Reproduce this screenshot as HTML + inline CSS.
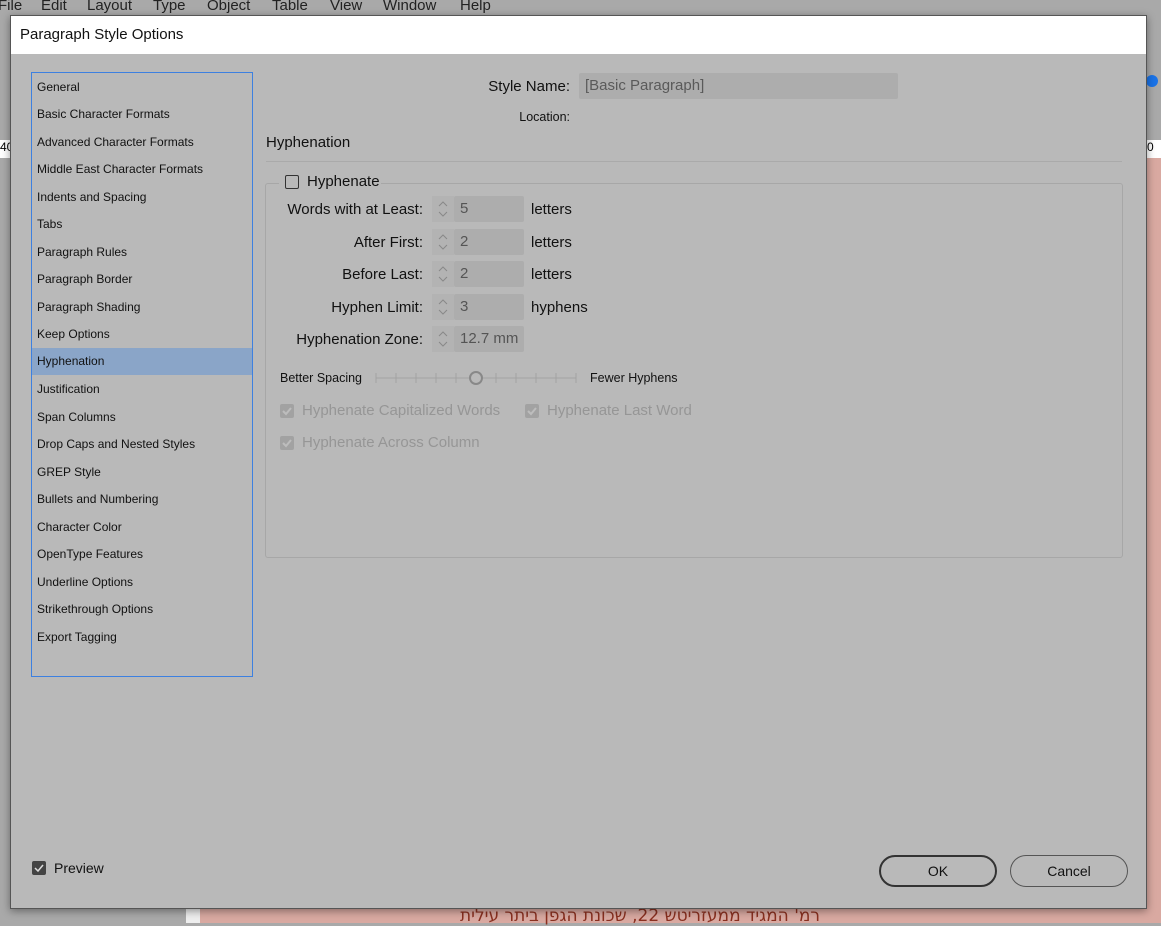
<!DOCTYPE html>
<html><head><meta charset="utf-8"><style>
*{margin:0;padding:0;box-sizing:border-box}
body{width:1161px;height:923px;overflow:hidden;background:#a9a9a9;font-family:"Liberation Sans",sans-serif;position:relative}
.abs{position:absolute}
.menu{top:-3px;left:0;font-size:15px;color:#222;white-space:nowrap}
.menu span{position:absolute}
.dlg{left:10px;top:15px;width:1137px;height:894px;background:#b9b9b9;border:1px solid #555;box-shadow:0 2px 8px rgba(0,0,0,.4)}
.title{left:0;top:0;width:100%;height:38px;background:#fff;font-size:15px;color:#111;padding:10px 9px}
.list{left:20px;top:56px;width:222px;height:605px;border:1px solid #3d80e0}
.list div{position:absolute;left:0;width:220px;height:27px;font-size:12px;color:#111;padding-left:5px;line-height:27px;white-space:nowrap}
.sel{background:#8aa5c8}
.lbl{font-size:15px;color:#111;text-align:right;white-space:nowrap}
.fld{background:#adadad;height:26px;border-radius:2px;font-size:15px;color:#555;padding:4px 6px;white-space:nowrap;overflow:hidden}
.spin{width:22px;height:26px;background:#b3b3b3}
.chk{width:14px;height:14px;border-radius:2px}
</style></head><body>
<div class="abs menu">
<span style="left:-2px">File</span><span style="left:41px">Edit</span><span style="left:87px">Layout</span><span style="left:153px">Type</span><span style="left:207px">Object</span><span style="left:272px">Table</span><span style="left:330px">View</span><span style="left:383px">Window</span><span style="left:460px">Help</span>
</div>
<div class="abs" style="left:200px;top:908px;width:961px;height:15px;background:#d9a9a1"></div>
<div class="abs" style="left:186px;top:908px;width:14px;height:15px;background:#eee"></div>
<div class="abs" style="left:460px;top:906px;font-size:17px;color:#8a3020;font-family:'DejaVu Sans',sans-serif">רמ' המגיד ממעזריטש 22, שכונת הגפן ביתר עילית</div>
<div class="abs" style="left:1147px;top:140px;width:14px;height:18px;background:#fff;font-size:12px">0</div>
<div class="abs" style="left:1147px;top:158px;width:14px;height:750px;background:#d9a9a1"></div>
<div class="abs" style="left:1146px;top:75px;width:12px;height:12px;border-radius:6px;background:#1a73e8"></div>
<div class="abs" style="left:0;top:140px;width:10px;height:18px;background:#fff;font-size:12px">40</div>

<div class="abs dlg">
<div class="abs title">Paragraph Style Options</div>
<div class="abs list">
<div style="top:1px">General</div>
<div style="top:28px">Basic Character Formats</div>
<div style="top:56px">Advanced Character Formats</div>
<div style="top:83px">Middle East Character Formats</div>
<div style="top:111px">Indents and Spacing</div>
<div style="top:138px">Tabs</div>
<div style="top:166px">Paragraph Rules</div>
<div style="top:193px">Paragraph Border</div>
<div style="top:221px">Paragraph Shading</div>
<div style="top:248px">Keep Options</div>
<div class="sel" style="top:275px">Hyphenation</div>
<div style="top:303px">Justification</div>
<div style="top:331px">Span Columns</div>
<div style="top:358px">Drop Caps and Nested Styles</div>
<div style="top:386px">GREP Style</div>
<div style="top:413px">Bullets and Numbering</div>
<div style="top:441px">Character Color</div>
<div style="top:468px">OpenType Features</div>
<div style="top:496px">Underline Options</div>
<div style="top:523px">Strikethrough Options</div>
<div style="top:551px">Export Tagging</div>
</div>

<div class="abs lbl" style="right:576px;top:62px">Style Name:</div>
<div class="abs fld" style="left:568px;top:57px;width:319px;color:#5a5a5a">[Basic Paragraph]</div>
<div class="abs lbl" style="right:576px;top:94px;font-size:12.5px">Location:</div>
<div class="abs" style="left:255px;top:118px;font-size:15px;color:#111">Hyphenation</div>
<div class="abs" style="left:255px;top:145px;width:856px;height:1px;background:#aaa"></div>
<div class="abs" style="left:254px;top:167px;width:858px;height:375px;border:1px solid #a7a7a7;border-radius:3px"></div>
<div class="abs" style="left:268px;top:158px;width:102px;height:20px;background:#b9b9b9"></div>
<div class="abs chk" style="left:274px;top:159px;border:1px solid #333"></div>
<div class="abs" style="left:296px;top:157px;font-size:15px;color:#111">Hyphenate</div>

<div class="abs lbl" style="right:723px;top:185px">Words with at Least:</div>
<div class="abs lbl" style="right:723px;top:218px">After First:</div>
<div class="abs lbl" style="right:723px;top:250px">Before Last:</div>
<div class="abs lbl" style="right:723px;top:283px">Hyphen Limit:</div>
<div class="abs lbl" style="right:723px;top:315px">Hyphenation Zone:</div>

<div class="abs spin" style="left:421px;top:180px"></div><div class="abs fld" style="left:443px;top:180px;width:70px">5</div>
<div class="abs spin" style="left:421px;top:213px"></div><div class="abs fld" style="left:443px;top:213px;width:70px">2</div>
<div class="abs spin" style="left:421px;top:245px"></div><div class="abs fld" style="left:443px;top:245px;width:70px">2</div>
<div class="abs spin" style="left:421px;top:278px"></div><div class="abs fld" style="left:443px;top:278px;width:70px">3</div>
<div class="abs spin" style="left:421px;top:310px"></div><div class="abs fld" style="left:443px;top:310px;width:70px">12.7 mm</div>
<svg class="abs" style="left:421px;top:180px" width="22" height="160" fill="none" stroke="#888" stroke-width="1">
<path d="M7 10l4-4 4 4M7 16l4 4 4-4"/><path d="M7 43l4-4 4 4M7 49l4 4 4-4"/><path d="M7 75l4-4 4 4M7 81l4 4 4-4"/><path d="M7 108l4-4 4 4M7 114l4 4 4-4"/><path d="M7 140l4-4 4 4M7 146l4 4 4-4"/>
</svg>
<div class="abs" style="left:520px;top:185px;font-size:15px;color:#111">letters</div>
<div class="abs" style="left:520px;top:218px;font-size:15px;color:#111">letters</div>
<div class="abs" style="left:520px;top:250px;font-size:15px;color:#111">letters</div>
<div class="abs" style="left:520px;top:283px;font-size:15px;color:#111">hyphens</div>

<div class="abs" style="left:269px;top:355px;font-size:12.5px;color:#111">Better Spacing</div>
<div class="abs" style="left:579px;top:355px;font-size:12.5px;color:#111">Fewer Hyphens</div>
<svg class="abs" style="left:364px;top:352px" width="202" height="20" stroke="#a3a3a3" fill="none">
<path d="M1 10h200M1 5v10M21 5v10M41 5v10M61 5v10M81 5v10M121 5v10M141 5v10M161 5v10M181 5v10M201 5v10"/>
<circle cx="101" cy="10" r="6" stroke="#888" stroke-width="2" fill="#b9b9b9"/>
</svg>

<div class="abs chk" style="left:269px;top:388px;background:#a2a2a2"></div>
<div class="abs" style="left:291px;top:386px;font-size:15px;color:#969696">Hyphenate Capitalized Words</div>
<div class="abs chk" style="left:514px;top:388px;background:#a2a2a2"></div>
<div class="abs" style="left:536px;top:386px;font-size:15px;color:#969696">Hyphenate Last Word</div>
<div class="abs chk" style="left:269px;top:420px;background:#a2a2a2"></div>
<div class="abs" style="left:291px;top:418px;font-size:15px;color:#969696">Hyphenate Across Column</div>
<svg class="abs" style="left:269px;top:388px" width="260" height="50" fill="none" stroke="#bdbdbd" stroke-width="2"><path d="M3 7l3 3 5-6M248 7l3 3 5-6M3 39l3 3 5-6"/></svg>

<div class="abs chk" style="left:21px;top:845px;background:#444"></div>
<svg class="abs" style="left:21px;top:845px" width="14" height="14" fill="none" stroke="#ddd" stroke-width="1.5"><path d="M3 7l3 3 5-6"/></svg>
<div class="abs" style="left:43px;top:844px;font-size:14px;color:#111">Preview</div>
<div class="abs" style="left:868px;top:839px;width:118px;height:32px;border:2px solid #333;border-radius:16px;font-size:14px;text-align:center;line-height:28px;color:#111">OK</div>
<div class="abs" style="left:999px;top:839px;width:118px;height:32px;border:1px solid #555;border-radius:16px;font-size:14px;text-align:center;line-height:30px;color:#111">Cancel</div>
</div>
</body></html>
